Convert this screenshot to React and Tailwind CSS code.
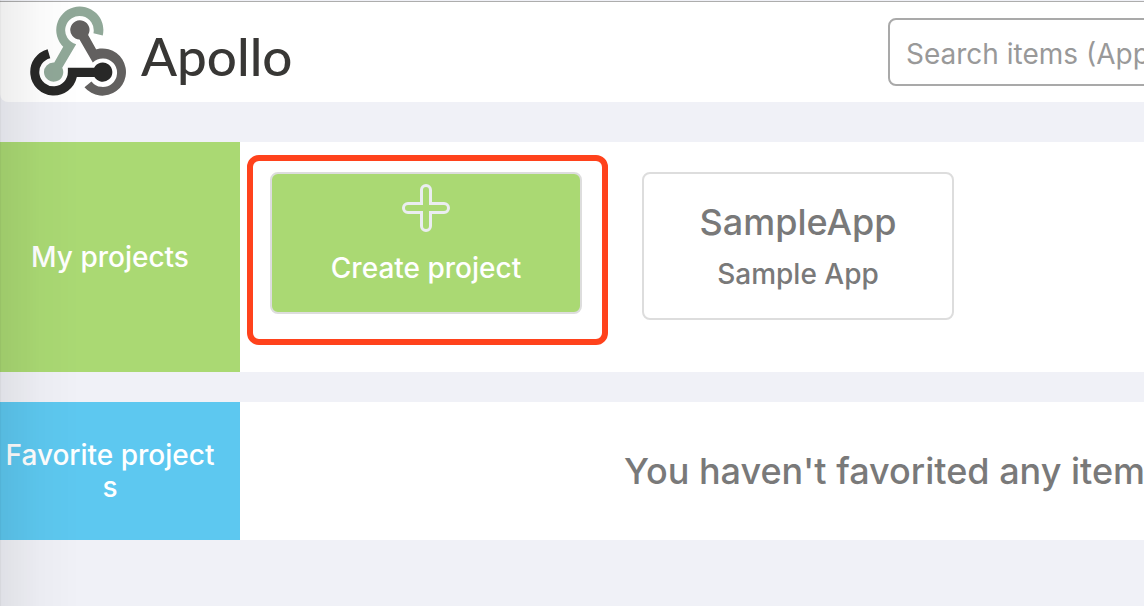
import React from "react";

function ApolloMark() {
  return (
    <svg viewBox="90 17 292 271" className="h-[90px] w-[97px] shrink-0" aria-hidden="true">
      <path
        fill="#90a898"
        d="M309 106A71 71 0 1 0 190 140L163 187A29 29 0 1 0 187 203L229 132A43 43 0 1 1 281 99Z"
      />
      <path
        fill="#62605f"
        d="M275 153A71 71 0 1 1 254 262L275 244A43 43 0 1 0 279 187L239 118A29 29 0 1 1 265 104L289 147Z"
      />
      <path
        fill="#282827"
        d="M231 231A71 71 0 1 1 143 147L151 174A43 43 0 1 0 204 216L204 203L283 203A29 29 0 1 1 284 231Z"
      />
    </svg>
  );
}

function PlusOutline() {
  return (
    <svg viewBox="0 0 48 48" className="size-12" fill="none" stroke="#ebedf1" strokeWidth="3" aria-hidden="true">
      <path d="M19.5 19.5V6a4.5 4.5 0 0 1 9 0V19.5H42a4.5 4.5 0 0 1 0 9H28.500V42a4.500 4.500 0 0 1-9 0V28.500H6a4.500 4.500 0 0 1 0-9Z" />
    </svg>
  );
}

function ProjectRow({ label, labelClass, children }) {
  return (
    <section className="flex bg-white">
      <h2
        className={`flex w-60 shrink-0 items-center justify-center pr-5 text-center text-[28px] leading-8 font-medium text-white ${labelClass}`}
      >
        <span>{label}</span>
      </h2>
      {children}
    </section>
  );
}

export default function App() {
  return (
    <div className="relative min-h-screen overflow-hidden bg-[#f0f1f7] font-['Inter','Noto_Sans_CJK_SC',sans-serif] text-[#797979]">
      <header className="mt-px flex h-[101px] items-center justify-between overflow-hidden rounded-bl-lg border-t border-[#adadad] bg-white">
        <a href="#home" className="flex items-center gap-[14px] pb-[2px] pl-[30px]">
          <ApolloMark />
          <span className="pt-2 font-['Lato',sans-serif] text-[53px] leading-none font-medium text-[#383735]">Apollo</span>
        </a>
        <div className="w-64 shrink-0">
          <input
            type="text"
            aria-label="Search items"
            placeholder="Search items (AppId, AppName)"
            className="h-[68px] w-[420px] rounded-lg border-2 border-[#a9a9a9] bg-white px-4 pt-1 text-[28px] placeholder:text-[#999999]"
          />
        </div>
      </header>

      <main className="flex flex-col gap-[30px] pt-10">
        <ProjectRow label="My projects" labelClass="bg-[#aad973]">
          <div className="flex min-h-[230px] items-start gap-[60px] px-[30px] pt-[30px]">
            <div className="relative">
              <button
                type="button"
                className="flex h-[142px] w-[312px] flex-col items-center gap-5 rounded-lg border-2 border-[#dddddd] bg-[#aad973] pt-[10px] text-[28px] leading-8 font-medium text-white"
              >
                <PlusOutline />
                Create project
              </button>
              <div className="pointer-events-none absolute -top-[17px] -right-[26px] -bottom-[31px] -left-[23px] rounded-xl border-6 border-[#ff421c]" />
            </div>
            <a
              href="#sample-app"
              className="flex h-[148px] w-[312px] flex-col items-center gap-4 rounded-lg border-2 border-[#dddddd] bg-white pt-7 font-medium"
            >
              <span className="text-[36px] leading-10">SampleApp</span>
              <span className="text-[28px] leading-8">Sample App</span>
            </a>
          </div>
        </ProjectRow>

        <ProjectRow
          label={
            <>
              Favorite project
              <br />s
            </>
          }
          labelClass="bg-[#5dc8f0]"
        >
          <div className="flex min-h-[138px] min-w-0 flex-1 items-center overflow-hidden pl-96">
            <p className="text-[36px] leading-10 font-medium whitespace-nowrap">
              You haven't favorited any items
            </p>
          </div>
        </ProjectRow>
      </main>

      <div className="pointer-events-none absolute inset-y-0 left-0 w-20 border-l border-black/10 bg-linear-to-r from-black/7 via-black/2 to-transparent" />
    </div>
  );
}
